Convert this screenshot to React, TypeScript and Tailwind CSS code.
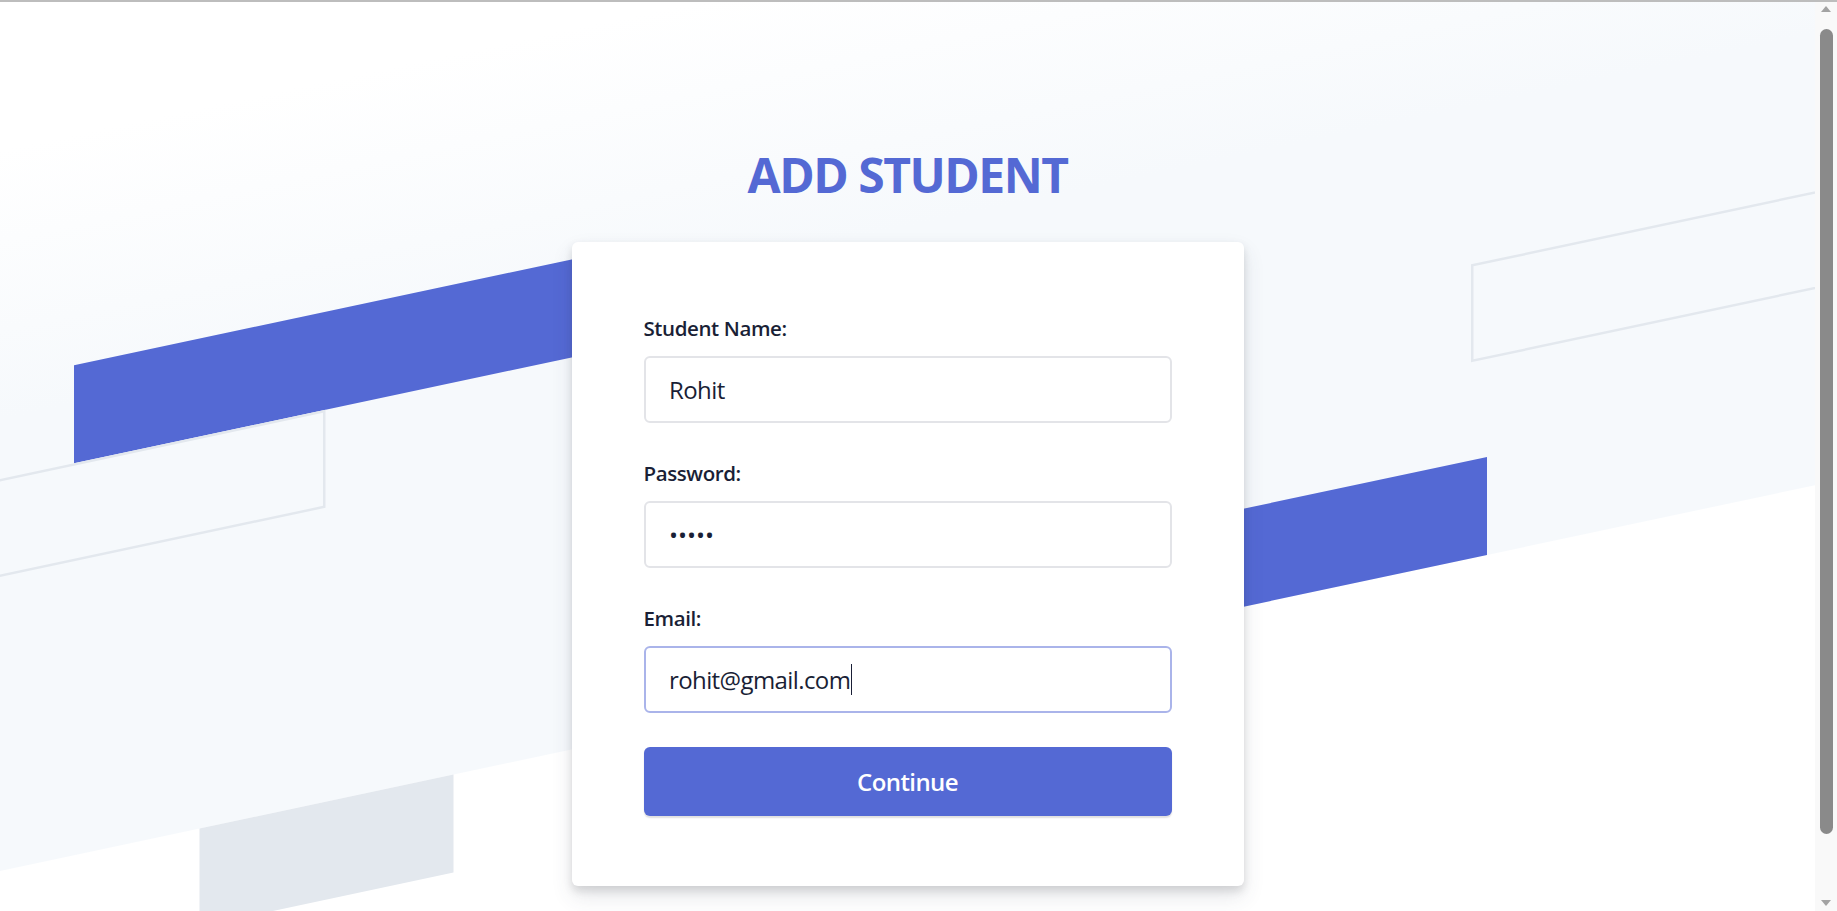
import React from "react";

function Background() {
  return (
    <svg className="absolute inset-0 h-full w-full" aria-hidden="true">
      <defs>
        <linearGradient id="fade" gradientUnits="userSpaceOnUse" x1="0" y1="150" x2="0" y2="420">
          <stop offset="0" stopColor="#ffffff" />
          <stop offset="1" stopColor="#f6f9fc" />
        </linearGradient>
      </defs>
      <g transform="skewY(-12)">
        <rect x="-50" y="-1000" width="2500" height="1871" fill="url(#fade)" />
        <rect x="74" y="381" width="560" height="98" fill="#5469d4" />
        <rect x="-50" y="480.25" width="374.25" height="95.5" fill="none" stroke="#e3e8ee" strokeWidth="2.5" />
        <rect x="1472.25" y="578.25" width="1100" height="95.5" fill="none" stroke="#e3e8ee" strokeWidth="2.5" />
        <rect x="700" y="773" width="787" height="98" fill="#5469d4" />
        <rect x="199.5" y="871" width="254" height="98" fill="#e3e8ee" />
      </g>
    </svg>
  );
}

function Label({ children }: { children: React.ReactNode }) {
  return (
    <label className="mb-[14px] block h-[28px] text-[20.5px] leading-[28px] font-semibold tracking-[-0.4px] text-[#1a1f36]">
      {children}
    </label>
  );
}

function Scrollbar() {
  return (
    <div className="flex h-full w-[22px] shrink-0 flex-col items-center bg-[#f9f9f9]">
      <svg width="10" height="6" className="mt-[6px]" aria-hidden="true">
        <path d="M0 6 L5 0 L10 6 Z" fill="#a3a3a3" />
      </svg>
      <div className="mt-[17px] h-[805px] w-[13px] rounded-full bg-[#8a8a8a]" />
      <svg width="10" height="6" className="mt-[66px]" aria-hidden="true">
        <path d="M0 0 L10 0 L5 6 Z" fill="#a3a3a3" />
      </svg>
    </div>
  );
}

export default function App() {
  return (
    <div className="relative flex h-[911px] w-full overflow-hidden bg-white font-['Open_Sans',sans-serif] text-[#1a1f36]">
      <div className="absolute left-0 right-0 top-0 z-20 h-[2px] bg-[#bdbdbd]" />
      <div className="relative flex-1 overflow-hidden">
        <Background />
        <main className="relative z-10 flex flex-col items-center pt-[151px]">
          <h1 className="text-[48px] leading-[48px] font-bold tracking-[-1.5px] text-[#5469d4]">ADD STUDENT</h1>
          <form
            className="mt-[43px] w-[672px] rounded-[6px] bg-white px-[72px] pt-[72px] pb-[70px] shadow-[0_10.5px_21px_0_rgba(60,66,87,0.12),0_4.5px_9px_0_rgba(0,0,0,0.12)]"
            onSubmit={(e) => e.preventDefault()}
          >
            <div className="pb-[36px]">
              <Label>Student Name:</Label>
              <input
                readOnly
                value="Rohit"
                className="block h-[67px] w-full rounded-[6px] border-2 border-[#e3e4e8] bg-white pl-[23.5px] pr-[24px] text-[24px] tracking-[-0.6px] text-[#1a1f36] outline-none"
              />
            </div>
            <div className="pb-[36px]">
              <Label>Password:</Label>
              <input
                readOnly
                type="password"
                value="12345"
                className="block h-[67px] w-full rounded-[6px] border-2 border-[#e3e4e8] bg-white pl-[23.5px] pr-[24px] text-[24px] text-[#1a1f36] outline-none"
              />
            </div>
            <div>
              <Label>Email:</Label>
              <div className="flex h-[67px] w-full items-center rounded-[6px] border-2 border-[#aab4ea] bg-white pl-[23.5px] pr-[24px] text-[24px] tracking-[-0.6px] text-[#1a1f36]">
                <span>rohit@gmail.com</span>
                <span className="ml-[1px] inline-block h-[31px] w-[1px] bg-[#1a1f36]" />
              </div>
            </div>
            <button
              type="submit"
              className="mt-[34px] block h-[69px] w-full rounded-[6px] bg-[#5469d4] text-[24px] font-semibold tracking-[-0.6px] text-white shadow-[0_1.5px_1.5px_0_rgba(0,0,0,0.12)]"
            >
              Continue
            </button>
          </form>
        </main>
      </div>
      <Scrollbar />
    </div>
  );
}
